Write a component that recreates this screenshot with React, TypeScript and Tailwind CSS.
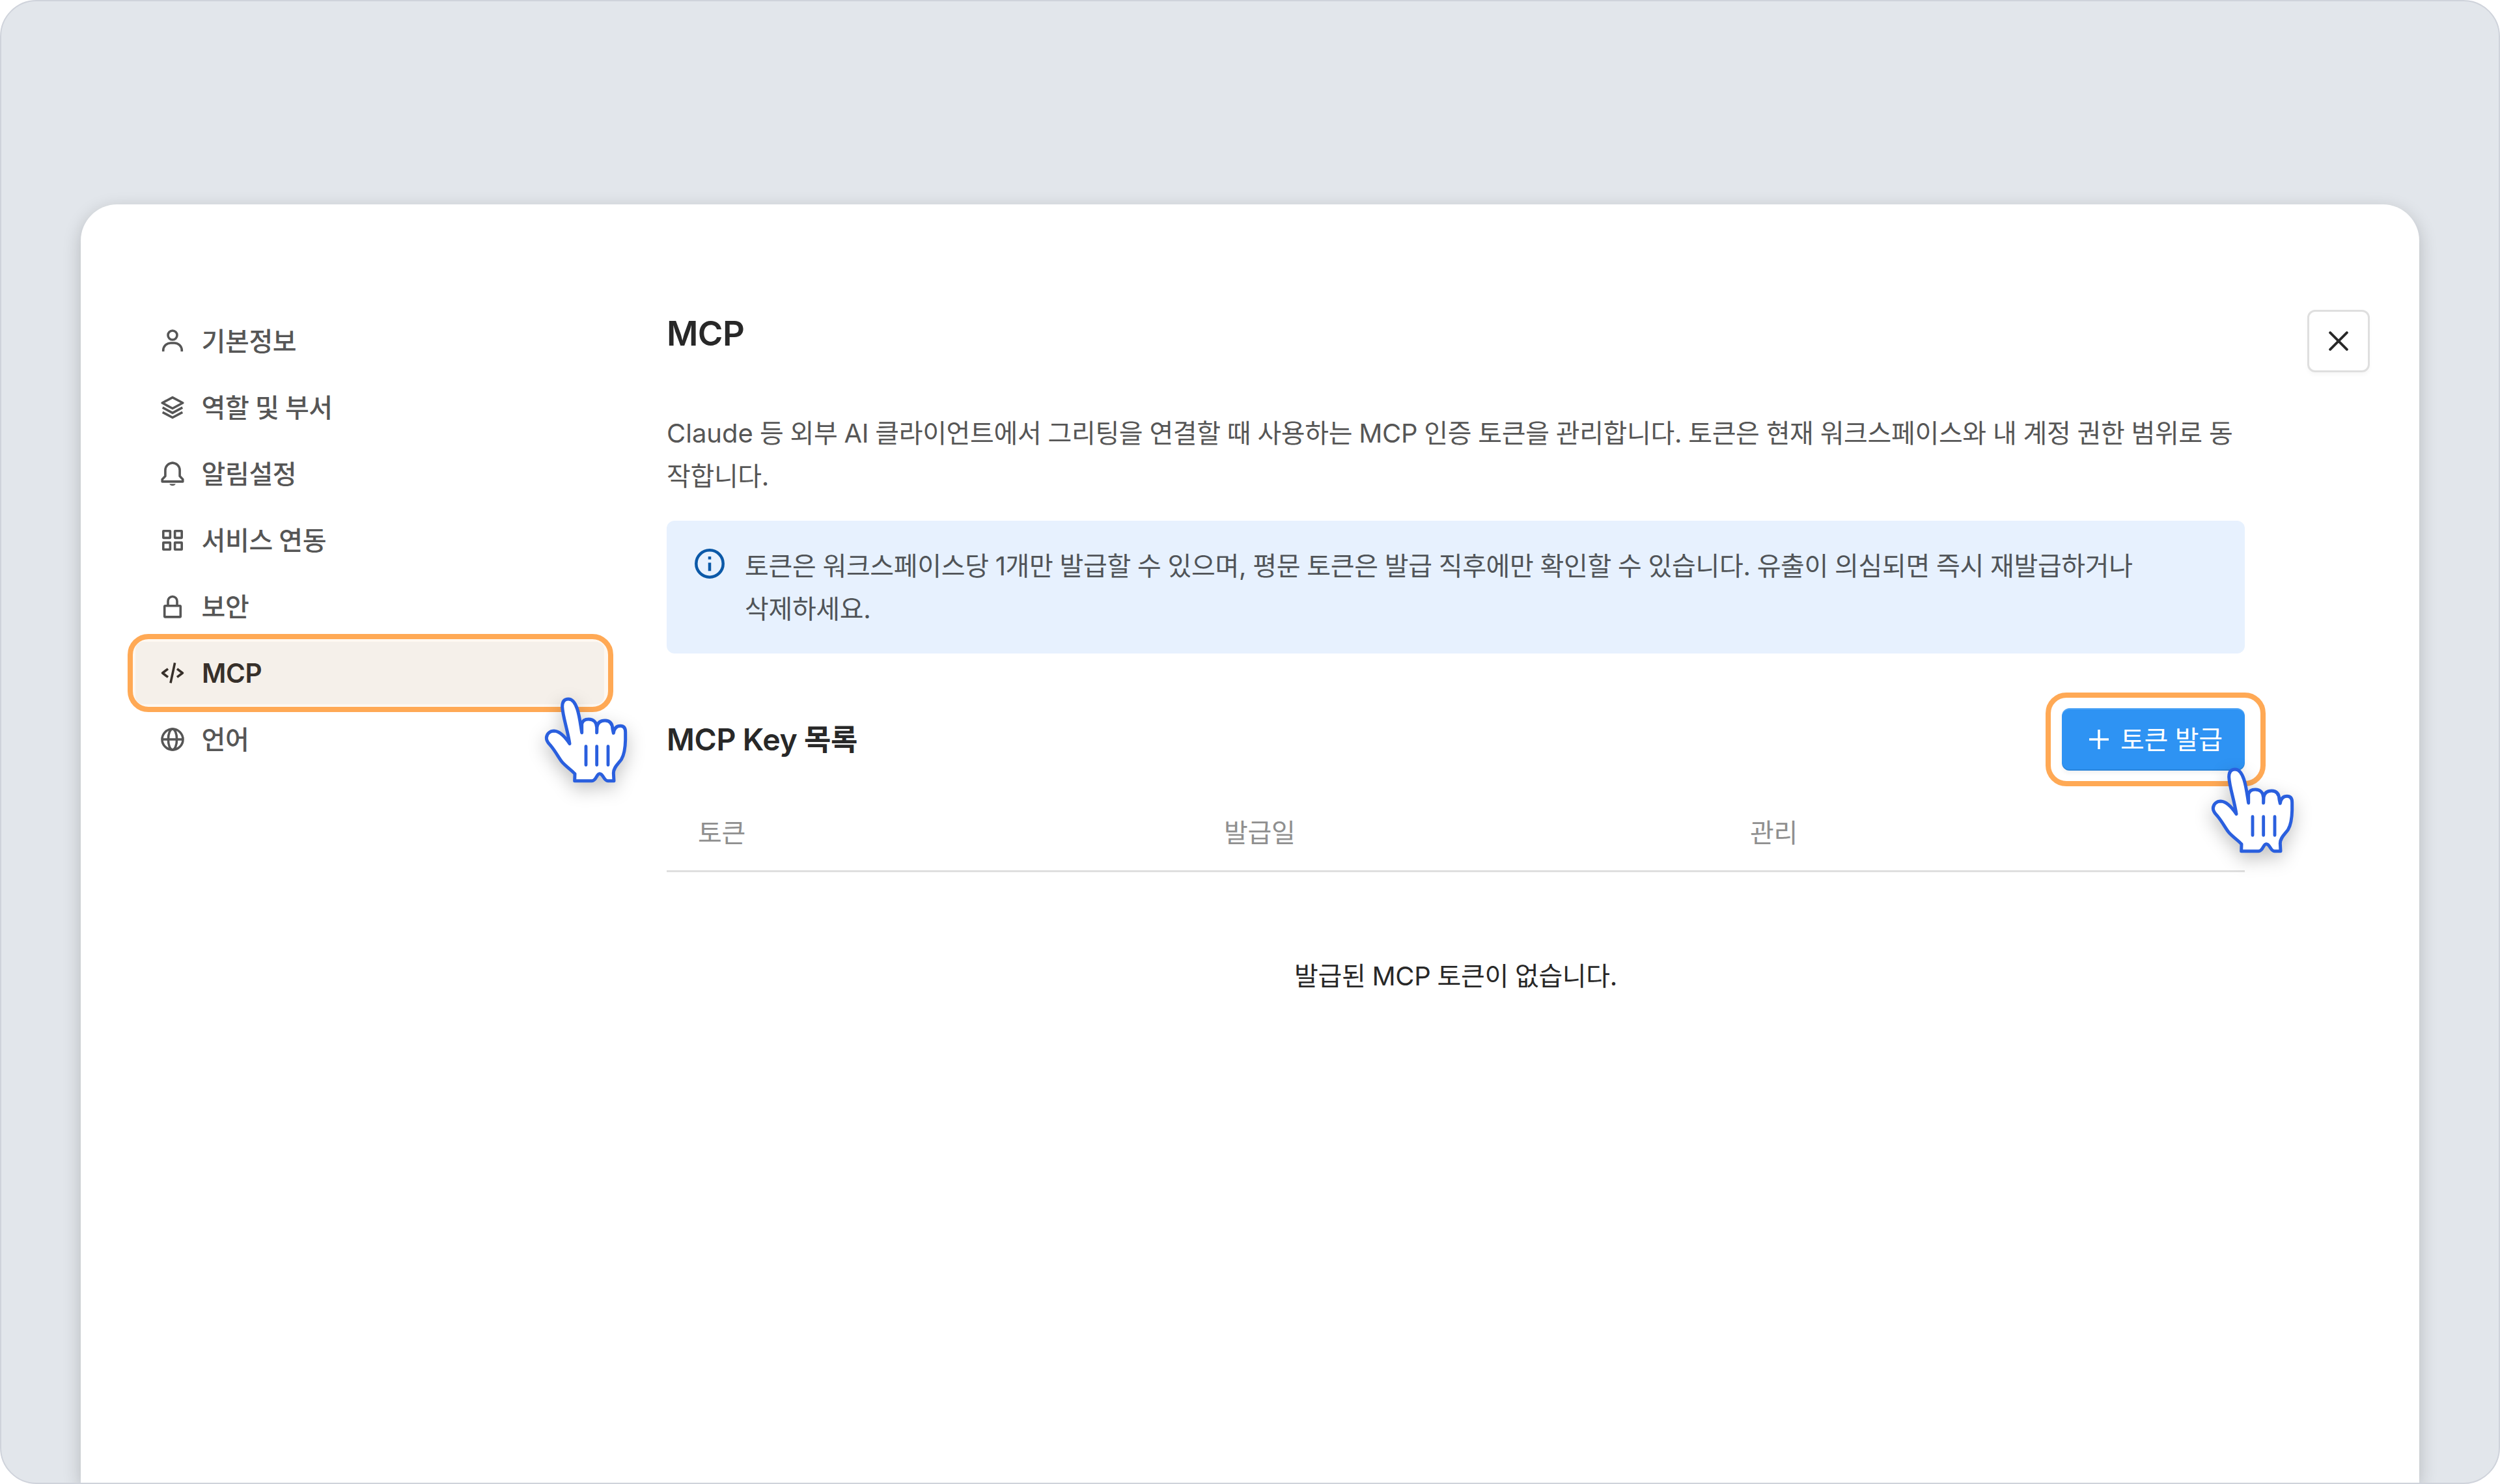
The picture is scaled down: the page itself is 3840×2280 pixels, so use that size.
import type { ReactNode } from "react";

function NavIcon({ children }: { children: ReactNode }) {
  return (
    <svg viewBox="0 0 48 48" className="size-12 shrink-0" fill="none" stroke="currentColor" strokeWidth="3.6">
      {children}
    </svg>
  );
}

const navItems: { label: string; icon: ReactNode; active?: boolean }[] = [
  {
    label: "기본정보",
    icon: (
      <>
        <circle cx="24" cy="15" r="7" />
        <path d="M9.7 40v-1.6A11.4 11.4 0 0 1 21.1 27h5.8a11.4 11.4 0 0 1 11.4 11.4V40" />
      </>
    ),
  },
  {
    label: "역할 및 부서",
    icon: (
      <>
        <path d="M8.2 17 24 8.6 39.8 17 24 25.5Z" strokeLinejoin="round" />
        <path d="M8.7 24.2 24 32.4l15.3-8.2M8.7 31.3 24 39.5l15.3-8.2" />
      </>
    ),
  },
  {
    label: "알림설정",
    icon: (
      <>
        <path d="M8.2 35.9v-3.5l4.7-4.8V18.4a11.1 11.1 0 0 1 22.2 0v9.2l4.7 4.8v3.5Z" strokeLinejoin="round" />
        <path d="M19.8 7.8a4.4 3.4 0 0 1 8.4 0Z" fill="currentColor" stroke="none" />
        <path d="M19.3 39.6h9.4a4.9 3.8 0 0 1-9.4 0Z" fill="currentColor" stroke="none" />
      </>
    ),
  },
  {
    label: "서비스 연동",
    icon: (
      <>
        <rect x="9.8" y="9.8" width="10.6" height="10.6" rx="0.3" />
        <rect x="27.6" y="9.8" width="10.6" height="10.6" rx="0.3" />
        <rect x="9.8" y="27.6" width="10.6" height="10.6" rx="0.3" />
        <rect x="27.6" y="27.6" width="10.6" height="10.6" rx="0.3" />
      </>
    ),
  },
  {
    label: "보안",
    icon: (
      <>
        <rect x="11.7" y="22.7" width="24.6" height="17.2" rx="1.2" />
        <path d="M17 22.5v-7a7 7 0 0 1 14 0v7" />
      </>
    ),
  },
  {
    label: "MCP",
    active: true,
    icon: <path d="M17 17.6 8.6 24l8.4 6.4M31 17.6l8.4 6.4-8.4 6.4M27.6 8.3l-6.6 31" strokeLinejoin="round" />,
  },
  {
    label: "언어",
    icon: (
      <>
        <circle cx="24" cy="24" r="16" />
        <ellipse cx="24" cy="24" rx="6.6" ry="16" />
        <path d="M8 24h32" />
      </>
    ),
  },
];

function HandPointer({ className }: { className: string }) {
  return (
    <svg
      viewBox="160 380 400 420"
      className={"pointer-events-none absolute z-10 h-[140px] w-[133.33px] overflow-visible drop-shadow-[0_10px_14px_rgba(0,0,0,0.24)] " + className}
      fill="#ffffff"
      stroke="#2a5fde"
      strokeWidth="15"
      strokeLinecap="round"
      strokeLinejoin="round"
    >
      <path d="M286 607C276 540 254 482 252 436C252 412 262 401 280 401C300 401 312 420 321 447C332 480 336 520 342 556L342 516C345 501 358 494 374 494C395 494 410 508 411 532L411 556L412 530C415 510 427 500 449 500C474 500 483 518 484 540L488 558C491 538 502 525 520 525C538 525 543 537 543 554L543 590C542 630 538 655 525 678C511 699 488 715 488 742L490 778L462 778C443 778 441 745 424 745C409 745 410 778 388 778L309 778L310 746C296 730 270 713 250 690C235 670 222 645 202 620C190 605 179 598 179 580C180 560 196 548 214 548C243 549 266 577 286 607Z" />
      <path d="M361 619v86M411 619v86M463 619v86" strokeWidth="14.5" />
    </svg>
  );
}

function HighlightRing({ className }: { className: string }) {
  return <div className={"pointer-events-none absolute rounded-[32px] border-8 border-[#ffa955] " + className} />;
}

export default function App() {
  return (
    <div className="flex h-[2280px] w-[3840px] overflow-hidden rounded-[56px] border-2 border-[#cfd3db] bg-[#e2e6eb] px-[122px] pt-[312px] font-['Inter','Noto_Sans_CJK_KR',sans-serif] text-[40px] tracking-[-0.35px] text-[#565656] [word-spacing:-0.8px]">
      <div className="flex flex-1 items-start gap-24 rounded-t-[56px] bg-white pt-[162px] pl-[84px] shadow-[0_8px_28px_rgba(0,0,0,0.2)]">
        <nav className="flex w-[720px] shrink-0 flex-col gap-1.5">
          {navItems.map((item) =>
            item.active ? (
              <div key={item.label} className="relative">
                <HighlightRing className="-top-3 -right-3.5 -bottom-3 -left-3 bg-[#fef8f1]" />
                <div className="relative flex h-24 items-center gap-[21px] rounded-xl bg-[#f5f0ea] pl-[33px] text-[40.5px] font-semibold tracking-[-0.4px] text-[#37302a]">
                  <NavIcon>{item.icon}</NavIcon>
                  <span className="pt-0.5">{item.label}</span>
                </div>
                <HandPointer className="top-[80.7px] left-[625.3px]" />
              </div>
            ) : (
              <div key={item.label} className="flex h-24 items-center gap-[20.5px] pl-[33px] font-medium">
                <NavIcon>{item.icon}</NavIcon>
                <span className="pt-0.5">{item.label}</span>
              </div>
            ),
          )}
        </nav>

        <main className="w-[2424px] shrink-0">
          <h1 className="text-[52.5px] leading-[72px] font-semibold tracking-[-0.6px] text-[#282828]">MCP</h1>
          <p className="mt-[85px] leading-[66px] whitespace-nowrap">
            <span className="tracking-normal">Claude</span> 등 외부 AI 클라이언트에서 그리팅을 연결할 때 사용하는 MCP 인증 토큰을 관리합니다. 토큰은 현재 워크스페이스와 내 계정 권한 범위로 동
            <br />
            작합니다.
          </p>

          <div className="mt-[35px] flex items-start gap-6 rounded-xl bg-[#e7f1fe] p-9 text-[#505458]">
            <svg viewBox="0 0 60 60" className="size-[60px] shrink-0" fill="none" stroke="#0b59a8" strokeWidth="4.5">
              <circle cx="30" cy="30" r="20.7" />
              <path d="M30 28.4v12.8M30 19v4.4" />
            </svg>
            <p className="-mb-px pt-px leading-[66px] whitespace-nowrap">
              토큰은 워크스페이스당 1개만 발급할 수 있으며, 평문 토큰은 발급 직후에만 확인할 수 있습니다. 유출이 의심되면 즉시 재발급하거나
              <br />
              삭제하세요.
            </p>
          </div>

          <div className="mt-[84px] flex h-24 items-center justify-between">
            <h2 className="text-[46.5px] leading-[72px] font-semibold tracking-[-0.35px] text-[#282828]">
              MCP Key <span className="text-[45px]">목록</span>
            </h2>
            <div className="relative">
              <button className="flex h-24 w-[281px] items-center rounded-xl bg-[#2e93f3] pl-[42px] text-white shadow-[inset_0_2px_0_rgba(255,255,255,0.16),inset_0_-2px_0_rgba(0,0,0,0.1),0_4px_6px_rgba(0,0,0,0.05)]">
                <svg viewBox="0 0 30 30" className="mr-[18px] size-[30px]" stroke="currentColor" strokeWidth="3.6">
                  <path d="M15 0v30M0 15h30" />
                </svg>
                <span className="pt-0.5">토큰 발급</span>
              </button>
              <HighlightRing className="-top-6 -right-8 -bottom-6 -left-[25px]" />
              <HandPointer className="top-[86.7px] left-[226.3px]" />
            </div>
          </div>

          <div className="mt-9 grid h-[120px] grid-cols-3 items-center border-b-[3px] border-[#dfdfdf] pt-0.5 text-[#8f8f8f]">
            <span className="pl-12">토큰</span>
            <span className="pl-12">발급일</span>
            <span className="pl-12">관리</span>
          </div>
          <div className="flex h-80 items-center justify-center text-[#282828]">발급된 MCP 토큰이 없습니다.</div>
        </main>

        <button className="flex size-24 shrink-0 items-center justify-center rounded-xl border-[3px] border-[#dfdfdf] bg-white text-[#282828] shadow-[0_4px_6px_rgba(0,0,0,0.03)]">
          <svg viewBox="0 0 30 30" className="size-[30px]" stroke="currentColor" strokeWidth="4" strokeLinecap="round">
            <path d="M2.2 2.2l25.6 25.6M27.8 2.2L2.2 27.8" />
          </svg>
        </button>
      </div>
    </div>
  );
}
